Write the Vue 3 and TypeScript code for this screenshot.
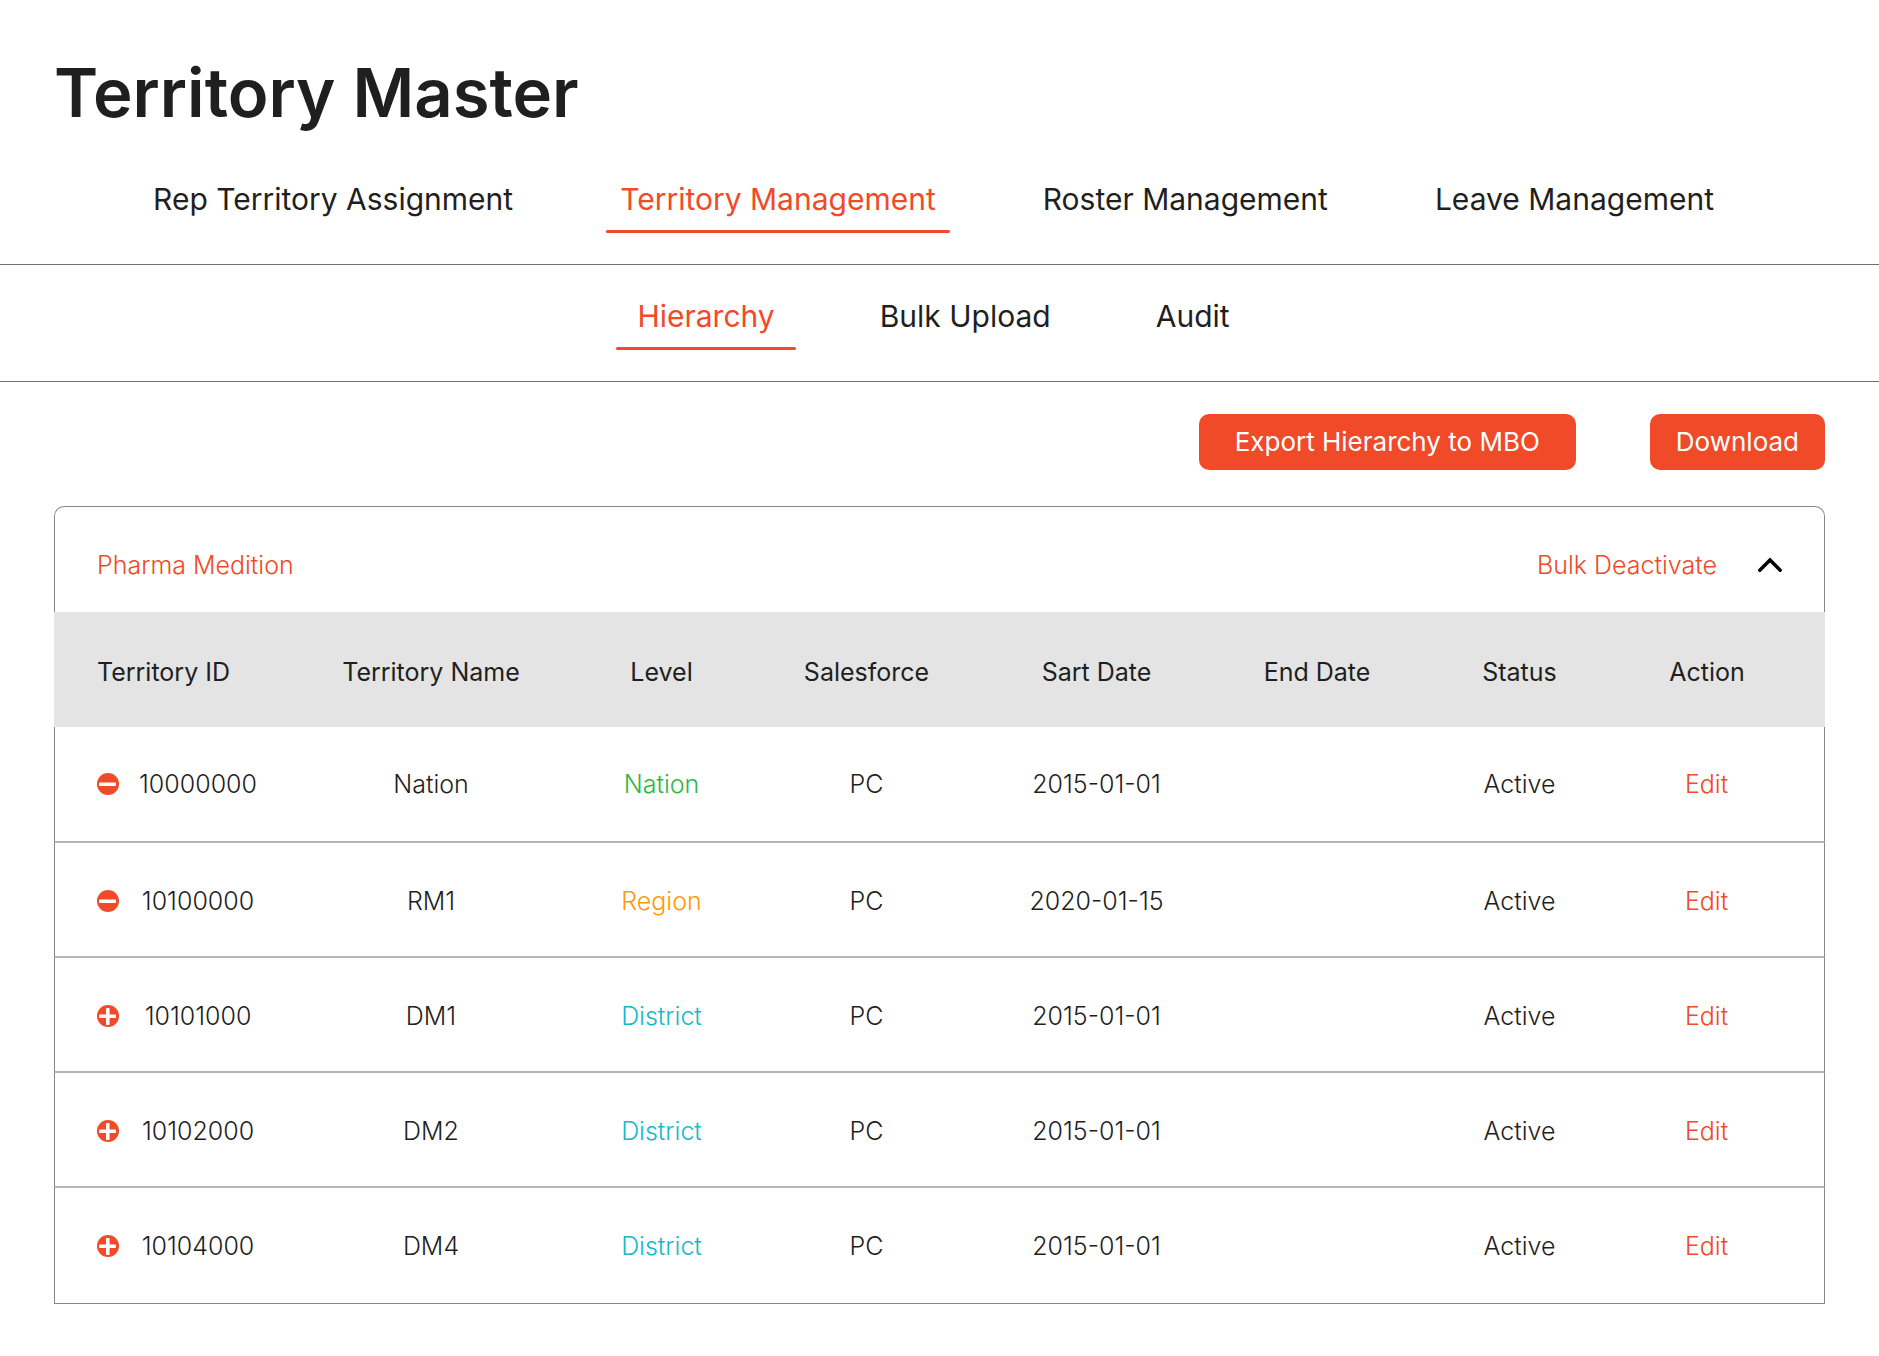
<script setup lang="ts">
import { ref } from 'vue'

interface Territory {
  id: string
  name: string
  level: 'Nation' | 'Region' | 'District'
  salesforce: string
  start: string
  end: string
  status: string
  expanded: boolean
}

const tabs: string[] = [
  'Rep Territory Assignment',
  'Territory Management',
  'Roster Management',
  'Leave Management',
]
const subTabs: string[] = ['Hierarchy', 'Bulk Upload', 'Audit']
const activeTab = ref('Territory Management')
const activeSubTab = ref('Hierarchy')
const open = ref(true)

// Relative column weights, turned into percentages of the table width.
const columns = [
  { label: 'Territory ID', weight: 256 },
  { label: 'Territory Name', weight: 242 },
  { label: 'Level', weight: 219 },
  { label: 'Salesforce', weight: 191 },
  { label: 'Sart Date', weight: 269 },
  { label: 'End Date', weight: 172 },
  { label: 'Status', weight: 233 },
  { label: 'Action', weight: 189 },
]
const totalWeight = columns.reduce((sum, c) => sum + c.weight, 0)

const rows = ref<Territory[]>([
  { id: '10000000', name: 'Nation', level: 'Nation', salesforce: 'PC', start: '2015-01-01', end: '', status: 'Active', expanded: true },
  { id: '10100000', name: 'RM1', level: 'Region', salesforce: 'PC', start: '2020-01-15', end: '', status: 'Active', expanded: true },
  { id: '10101000', name: 'DM1', level: 'District', salesforce: 'PC', start: '2015-01-01', end: '', status: 'Active', expanded: false },
  { id: '10102000', name: 'DM2', level: 'District', salesforce: 'PC', start: '2015-01-01', end: '', status: 'Active', expanded: false },
  { id: '10104000', name: 'DM4', level: 'District', salesforce: 'PC', start: '2015-01-01', end: '', status: 'Active', expanded: false },
])
</script>

<template>
  <div class="page">
    <h1 class="title">Territory Master</h1>

    <nav class="tabs" aria-label="Sections">
      <a
        v-for="tab in tabs"
        :key="tab"
        href="#"
        class="tab"
        :class="{ active: tab === activeTab }"
        @click.prevent="activeTab = tab"
      >{{ tab }}</a>
    </nav>

    <nav class="tabs sub" aria-label="Territory management">
      <a
        v-for="tab in subTabs"
        :key="tab"
        href="#"
        class="tab"
        :class="{ active: tab === activeSubTab }"
        @click.prevent="activeSubTab = tab"
      >{{ tab }}</a>
    </nav>

    <main class="content">
      <div class="actions">
        <button type="button" class="btn wide">Export Hierarchy to MBO</button>
        <button type="button" class="btn">Download</button>
      </div>

      <section>
        <header class="panel-head">
          <h2 class="panel-title">Pharma Medition</h2>
          <button type="button" class="text-btn">Bulk Deactivate</button>
          <button type="button" class="icon-btn" aria-label="Toggle panel" :aria-expanded="open" @click="open = !open">
            <svg width="26" height="18" viewBox="0 0 26 18" fill="none" stroke="#000" stroke-width="3.400" stroke-linecap="round" stroke-linejoin="miter" aria-hidden="true">
              <path d="M2.800 14.200 13 4l10.200 10.200" />
            </svg>
          </button>
        </header>

        <table v-if="open" class="grid">
          <colgroup>
            <col v-for="c in columns" :key="c.label" :style="{ width: (c.weight / totalWeight) * 100 + '%' }" />
          </colgroup>
          <thead>
            <tr>
              <th v-for="c in columns" :key="c.label" scope="col">{{ c.label }}</th>
            </tr>
          </thead>
          <tbody>
            <tr v-for="row in rows" :key="row.id">
              <td>
                <div class="id-cell">
                  <button
                    type="button"
                    class="icon-btn"
                    :aria-label="(row.expanded ? 'Collapse ' : 'Expand ') + row.id"
                    @click="row.expanded = !row.expanded"
                  >
                    <svg width="22" height="22" viewBox="0 0 22 22" aria-hidden="true">
                      <circle cx="11" cy="11" r="11" fill="#f04a29" />
                      <rect x="2" y="9.500" width="17" height="3.600" rx="0.800" fill="#fff" />
                      <rect v-if="!row.expanded" x="9" y="3" width="3.600" height="17" rx="0.800" fill="#fff" />
                    </svg>
                  </button>
                  <span class="id">{{ row.id }}</span>
                </div>
              </td>
              <td>{{ row.name }}</td>
              <td :class="row.level.toLowerCase()">{{ row.level }}</td>
              <td>{{ row.salesforce }}</td>
              <td>{{ row.start }}</td>
              <td>{{ row.end }}</td>
              <td>{{ row.status }}</td>
              <td><a href="#" class="edit" @click.prevent>Edit</a></td>
            </tr>
          </tbody>
        </table>
      </section>
    </main>
  </div>
</template>

<style>
body {
  background: #fff;
}
</style>

<style scoped>
.page {
  font-family: Inter, 'Liberation Sans', sans-serif;
  font-size: 25px;
  font-weight: 300;
  line-height: 32px;
  color: #1f1f1f;
  padding-bottom: 52px;
}

.title {
  margin: 0;
  padding: 51px 54px 0;
  font-size: 67px;
  font-weight: 600;
  line-height: 84px;
}

.tabs {
  display: flex;
  justify-content: center;
  gap: 107px;
  padding: 44px 12px 45px 0;
  border-bottom: 1px solid #6f6f6f;
}

.tabs.sub {
  gap: 105px;
  padding-top: 31px;
}

.tab {
  position: relative;
  font-size: 30px;
  font-weight: 400;
  line-height: 40px;
  color: inherit;
  text-decoration: none;
  white-space: nowrap;
}

.tab.active {
  color: #f04a29;
}

.tab.active::after {
  content: '';
  position: absolute;
  left: -14px;
  right: -14px;
  bottom: -14px;
  height: 3px;
  border-radius: 2px;
  background: #f04a29;
}

.sub .tab.active::after {
  left: -21px;
  right: -21px;
}

.content {
  padding: 32px 54px 0;
}

.actions {
  display: flex;
  justify-content: flex-end;
  gap: 74px;
  margin-bottom: 36px;
}

.btn {
  height: 56px;
  padding: 0 26px;
  border: 0;
  border-radius: 10px;
  background: #f04a29;
  color: #fff;
  font: inherit;
  font-size: 26px;
  font-weight: 400;
  white-space: nowrap;
}

.btn.wide {
  padding: 0 36px;
}

.panel-head {
  display: flex;
  align-items: center;
  height: 106px;
  box-sizing: border-box;
  padding: 10px 41px 0 42px;
  border: 1px solid #888;
  border-bottom: 0;
  border-radius: 10px 10px 0 0;
  color: #f04a29;
}

.panel-title {
  margin: 0 auto 0 0;
  font: inherit;
}

.text-btn,
.icon-btn {
  border: 0;
  padding: 0;
  background: none;
  font: inherit;
  color: inherit;
}

.icon-btn svg {
  display: block;
}

.panel-head .icon-btn {
  margin-left: 40px;
}

.grid {
  width: 100%;
  table-layout: fixed;
  border-collapse: separate;
  border-spacing: 0;
}

th,
td {
  box-sizing: border-box;
  height: 115px;
  padding: 2px 0 0;
  text-align: center;
  vertical-align: middle;
  font-weight: inherit;
  white-space: nowrap;
}

th {
  padding-top: 4px;
  background: #e4e4e4;
  font-weight: 400;
}

th:first-child {
  padding-left: 43px;
  text-align: left;
}

th:last-child,
td:last-child {
  padding-right: 47px;
}

td {
  border-bottom: 2px solid #b5b5b5;
}

td:first-child {
  border-left: 1px solid #888;
}

td:last-child {
  border-right: 1px solid #888;
}

tbody tr:first-child td,
tbody tr:last-child td {
  height: 116px;
  padding-top: 0;
}

tbody tr:last-child td {
  border-bottom: 1px solid #888;
}

.id-cell {
  display: flex;
  align-items: center;
  gap: 19px;
  padding-left: 42px;
}

.id {
  width: 120px;
}

.nation {
  color: #2db742;
}

.region {
  color: #fd9a04;
}

.district {
  color: #16b9c9;
}

.edit {
  color: #f04a29;
  text-decoration: none;
}
</style>
